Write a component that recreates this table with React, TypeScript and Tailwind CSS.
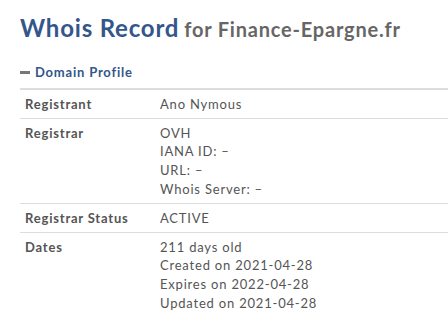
import React, { FC } from "react";

type Row = {
  label: string;
  values: string[];
};

const rows: Row[] = [
  { label: "Registrant", values: ["Ano Nymous"] },
  {
    label: "Registrar",
    values: ["OVH", "IANA ID: \u2013", "URL: \u2013", "Whois Server: \u2013"],
  },
  { label: "Registrar Status", values: ["ACTIVE"] },
  {
    label: "Dates",
    values: [
      "211 days old",
      "Created on 2021-04-28",
      "Expires on 2022-04-28",
      "Updated on 2021-04-28",
    ],
  },
];

const App: FC = () => {
  return (
    <div className="w-[448px] h-[313px] overflow-hidden bg-white pl-[20px] pt-[12px] tracking-[0.05em] font-['Lato','Liberation_Sans',sans-serif]">
      <h1 className="leading-[32px] whitespace-nowrap">
        <span className="text-[24px] font-bold text-[#34568b]">Whois Record</span>{" "}
        <span className="text-[20px] font-bold text-[#666666]">for Finance-Epargne.fr</span>
      </h1>

      <div className="mt-[16px] flex items-center gap-[5px] text-[13px] leading-[18px] font-bold text-[#34568b]">
        <span className="block w-[10px] h-[3px] bg-[#777777]" />
        <span>Domain Profile</span>
      </div>

      <div className="mt-[7px] border-t-2 border-[#dddddd] w-[428px]">
        {rows.map((row, i) => (
          <div
            key={row.label}
            className={`flex text-[13px] leading-[18.67px] text-[#555555] py-[4.67px] pl-[5px] ${
              i > 0 ? "border-t border-[#dddddd]" : ""
            }`}
          >
            <div className="w-[135px] font-bold">{row.label}</div>
            <div className="flex flex-col">
              {row.values.map((v) => (
                <span key={v}>{v}</span>
              ))}
            </div>
          </div>
        ))}
      </div>
    </div>
  );
};

export default App;
